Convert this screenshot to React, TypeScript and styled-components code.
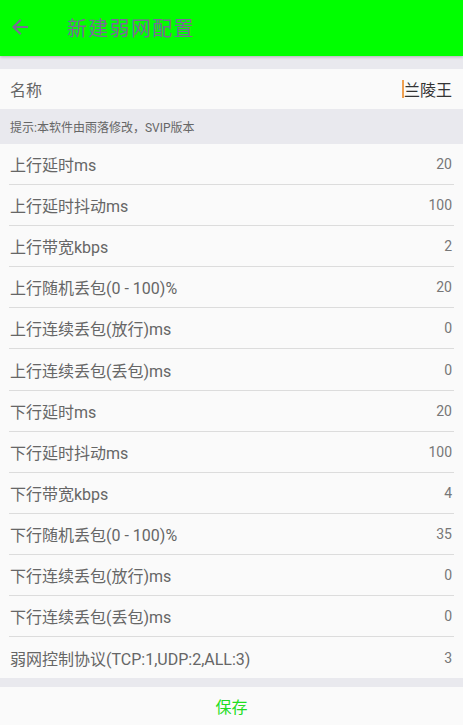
import React from "react";
import styled, { createGlobalStyle } from "styled-components";

const Global = createGlobalStyle`
  html, body { margin: 0; padding: 0; background: #e9e9ee; }
  body { font-family: Roboto, "Noto Sans CJK SC", sans-serif; }
  * { box-sizing: border-box; }
`;

const Page = styled.div`
  width: 463px;
  height: 725px;
  display: flex;
  flex-direction: column;
  background: #e9e9ee;
  overflow: hidden;
`;

const Toolbar = styled.header`
  height: 56px;
  background: #00ff00;
  display: flex;
  align-items: center;
  padding-left: 8px;
  box-shadow: 0 1px 3px rgba(0, 0, 0, 0.25);
  position: relative;
  z-index: 1;
`;

const Back = styled.button`
  border: none;
  background: none;
  padding: 0;
  width: 24px;
  height: 24px;
  display: flex;
  align-items: center;
  justify-content: center;
  margin-right: 35px;
  margin-top: -2px;
`;

const Title = styled.h1`
  margin: 0;
  font-size: 20px;
  font-weight: 400;
  color: #7a6a98;
  letter-spacing: 1.3px;
  margin-top: -2px;
`;

const Spacer = styled.div<{ h: number }>`
  height: ${(p) => p.h}px;
  flex-shrink: 0;
`;

const NameRow = styled.div`
  height: 40px;
  background: #fafafa;
  display: flex;
  align-items: center;
  justify-content: space-between;
  padding: 0 11px 0 10px;
`;

const Label = styled.span`
  font-size: 16px;
  color: #666;
`;

const NameValue = styled.span`
  font-size: 16px;
  color: #333;
  display: flex;
  align-items: center;
`;

const Caret = styled.span`
  display: inline-block;
  width: 2px;
  height: 18px;
  background: #f0a050;
`;

const Hint = styled.div`
  height: 35px;
  display: flex;
  align-items: center;
  padding-left: 10px;
  font-size: 12px;
  color: #666;
`;

const List = styled.div`
  background: #fafafa;
  display: flex;
  flex-direction: column;
`;

const Row = styled.div<{ last?: boolean }>`
  height: 41.1px;
  margin: 0 9px;
  display: flex;
  align-items: center;
  justify-content: space-between;
  border-bottom: ${(p) => (p.last ? "none" : "1px solid #dcdcdc")};
  padding: 0 2px 0 1px;
`;

const Value = styled.span`
  font-size: 14px;
  color: #777;
`;

const SaveBar = styled.div`
  flex: 1;
  background: #fafafa;
  display: flex;
  align-items: center;
  justify-content: center;
`;

const SaveButton = styled.button`
  border: none;
  background: none;
  font-family: inherit;
  font-size: 16px;
  color: #22dd22;
  padding: 0;
`;

const rows: [string, string][] = [
  ["上行延时ms", "20"],
  ["上行延时抖动ms", "100"],
  ["上行带宽kbps", "2"],
  ["上行随机丢包(0 - 100)%", "20"],
  ["上行连续丢包(放行)ms", "0"],
  ["上行连续丢包(丢包)ms", "0"],
  ["下行延时ms", "20"],
  ["下行延时抖动ms", "100"],
  ["下行带宽kbps", "4"],
  ["下行随机丢包(0 - 100)%", "35"],
  ["下行连续丢包(放行)ms", "0"],
  ["下行连续丢包(丢包)ms", "0"],
  ["弱网控制协议(TCP:1,UDP:2,ALL:3)", "3"],
];

export default function App() {
  return (
    <Page>
      <Global />
      <Toolbar>
        <Back aria-label="back">
          <svg width="24" height="24" viewBox="0 0 24 24">
            <path
              d="M20 11H7.83l5.59-5.59L12 4l-8 8 8 8 1.41-1.41L7.83 13H20v-2z"
              fill="#7a6a98"
            />
          </svg>
        </Back>
        <Title>新建弱网配置</Title>
      </Toolbar>
      <Spacer h={13} />
      <NameRow>
        <Label>名称</Label>
        <NameValue>
          <Caret />
          兰陵王
        </NameValue>
      </NameRow>
      <Hint>提示:本软件由雨落修改，SVIP版本</Hint>
      <List>
        {rows.map(([k, v], i) => (
          <Row key={k} last={i === rows.length - 1}>
            <Label>{k}</Label>
            <Value>{v}</Value>
          </Row>
        ))}
      </List>
      <Spacer h={9} />
      <SaveBar>
        <SaveButton>保存</SaveButton>
      </SaveBar>
    </Page>
  );
}
